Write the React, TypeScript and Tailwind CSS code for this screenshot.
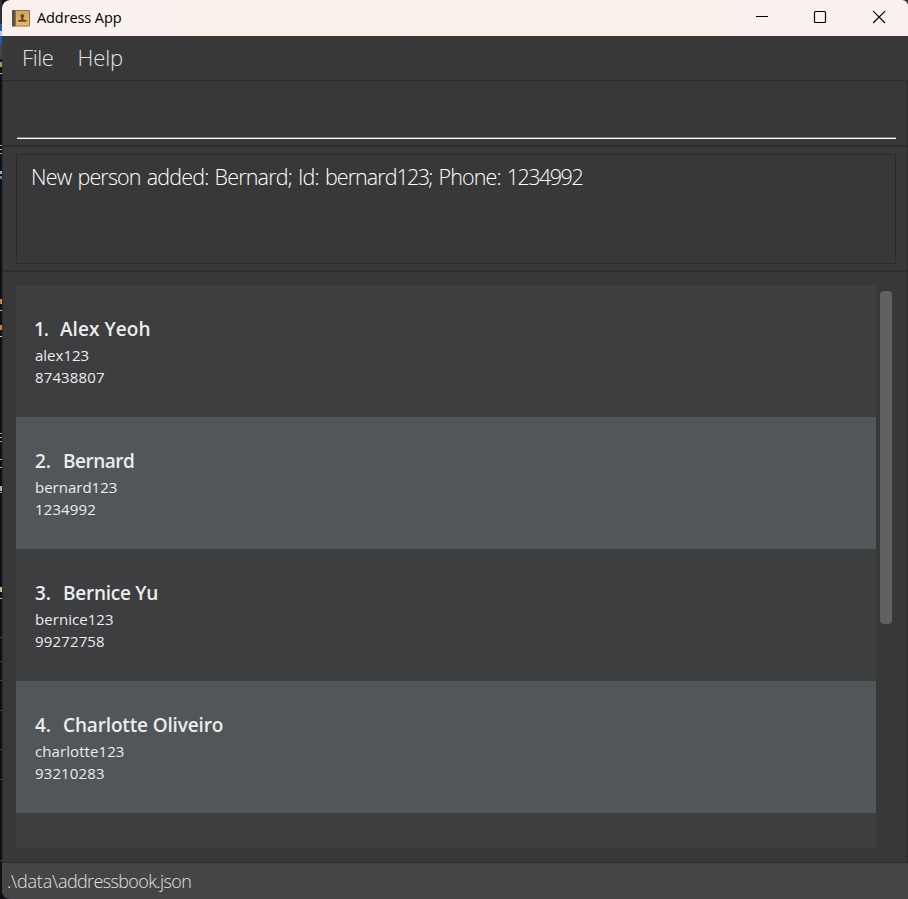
import React from "react";

type Person = { no: string; name: string; id: string; phone: string; noClass: string; nameClass: string; idClass: string; phoneClass: string };

const people: Person[] = [
  { no: "1.", name: "Alex Yeoh", id: "alex123", phone: "87438807", noClass: "-ml-px w-[26px] tracking-[-1px]", nameClass: "tracking-[0.050px]", idClass: "tracking-[0px]", phoneClass: "tracking-[0.130px]" },
  { no: "2.", name: "Bernard", id: "bernard123", phone: "1234992", noClass: "w-[28px]", nameClass: "tracking-[-0.500px]", idClass: "tracking-[0px]", phoneClass: "tracking-[0.130px]" },
  { no: "3.", name: "Bernice Yu", id: "bernice123", phone: "99272758", noClass: "w-[28px]", nameClass: "tracking-[-0.250px]", idClass: "tracking-[0.050px]", phoneClass: "tracking-[0.150px]" },
  { no: "4.", name: "Charlotte Oliveiro", id: "charlotte123", phone: "93210283", noClass: "w-[28px]", nameClass: "tracking-[-0.150px]", idClass: "tracking-[0.080px]", phoneClass: "tracking-[0.130px]" },
];

const specks: [number, number, string][] = [
  [0, 24, "#303030"], [24, 20, "#2a56b8"], [31, 5, "#b9cbed"], [44, 15, "#454545"],
  [62, 5, "#b09455"], [73, 1, "#cccccc"], [145, 1, "#aaaaaa"], [149, 1, "#aaaaaa"], [153, 1, "#aaaaaa"],
  [171, 3, "#8ab8d8"], [176, 3, "#5588aa"], [299, 5, "#c08850"], [310, 1, "#cccccc"],
  [325, 5, "#c08850"], [336, 1, "#cccccc"], [433, 1, "#aaaaaa"], [437, 1, "#aaaaaa"], [441, 1, "#aaaaaa"],
  [459, 1, "#aaaaaa"], [467, 1, "#aaaaaa"], [486, 5, "#a0b8b0"], [492, 1, "#b09455"],
  [587, 5, "#c0b890"], [598, 1, "#cccccc"], [637, 1, "#903020"], [661, 1, "#444444"],
  [680, 1, "#444444"], [710, 1, "#444444"], [749, 1, "#444444"], [779, 1, "#444444"], [860, 1, "#444444"],
];

function BookIcon() {
  return (
    <svg width="18" height="17" viewBox="0 0 18 17" className="block">
      <defs>
        <linearGradient id="cover" x1="0" y1="0" x2="0" y2="1">
          <stop offset="0" stopColor="#d5a363" />
          <stop offset="1" stopColor="#ecbb65" />
        </linearGradient>
      </defs>
      <rect x="0" y="0" width="18" height="16.5" rx="1" fill="#94703f" />
      <rect x="0" y="0" width="3" height="16.5" rx="1" fill="#57504e" />
      <rect x="4" y="1" width="13" height="14.5" fill="url(#cover)" />
      <path d="M8.500 5.800c0-1.200.6-1.900 1.800-1.900s1.800.7 1.800 1.900c0 1-.3 1.500-.7 2.100v1.500l2.500.5c.5.100.8.400.8.900v1H6v-1c0-.5.300-.8.800-.9l2.400-.5V7.900c-.4-.6-.7-1.100-.7-2.100z" fill="#65492c" />
    </svg>
  );
}

function TitleBar() {
  return (
    <header className="flex h-9 shrink-0 items-center rounded-tl-lg rounded-tr-md bg-linear-to-r from-[#f9f1ee] via-[#faf1eb] to-[#f9f1ee] pl-2.5 text-black">
      <BookIcon />
      <span className="ml-[7px] text-[14.5px] leading-5 tracking-[-0.090px] whitespace-pre">Address App</span>
      <div className="-mr-0.5 ml-auto flex">
        <svg width="58" height="36" className="block" shapeRendering="crispEdges">
          <path d="M20 16.500H32" stroke="#000" />
        </svg>
        <svg width="58" height="36" className="block">
          <rect x="20.500" y="11.500" width="11" height="11" rx="1" fill="none" stroke="#000" strokeWidth="1.200" />
        </svg>
        <svg width="58" height="36" className="block">
          <path d="M21.200 11.200L33 23M33 11.200L21.200 23" fill="none" stroke="#000" strokeWidth="1.200" />
        </svg>
      </div>
    </header>
  );
}

export default function App() {
  return (
    <div className="flex h-[899px] w-[908px] overflow-hidden bg-[#0d1015] font-['Open_Sans','Noto_Sans',sans-serif]">
      <svg width="2" height="899" className="block shrink-0" shapeRendering="crispEdges">
        {specks.map(([y, h, fill]) => (
          <rect key={y} x="0" y={y} width="2" height={h} fill={fill} />
        ))}
      </svg>
      <div className="flex min-w-0 flex-1 flex-col overflow-hidden rounded-l-lg bg-[#383838]">
        <TitleBar />
        <nav className="flex h-11 shrink-0 items-center gap-[24px] pb-0.5 pl-5 text-[22px] leading-[30px] font-light text-[#e4e4e4]">
          <span className="tracking-[-0.400px]">File</span>
          <span className="tracking-[-0.100px]">Help</span>
        </nav>
        <section className="flex h-[65px] shrink-0 flex-col border border-b-0 border-[#2c2c2c] pr-[11px] pl-3.5">
          <div className="h-[58px] border-b border-white shadow-[inset_0_-1px_0_#777777]" />
        </section>
        <section className="h-[125px] shrink-0 border-x border-t-2 border-[#2c2c2c] px-[11px] pt-[7px] pl-[13px]">
          <div className="h-[110px] border border-[#2b2b2b] pt-[7px] pl-3.5 text-[21.5px] leading-[30px] font-light whitespace-pre text-white">
            <p className="tracking-[-0.830px] [word-spacing:1.300px]">
              New person added: Bernard; Id: <span className="tracking-[-0.950px]">bernard</span><span className="tracking-[-1.700px]">123</span>; <span className="tracking-[-0.900px]">Phone:</span> <span className="tracking-[-1.500px]">1234992</span>
            </p>
          </div>
        </section>
        <section className="flex h-[592px] shrink-0 border-x border-t-2 border-[#2c2c2c] pt-[13px] pl-[13px]">
          <div className="h-[563px] w-[860px] overflow-hidden bg-[#3c3e3f]">
            {people.map((p, i) => (
              <article key={p.id} className={`h-[132px] pt-[30px] pl-[19px] text-[#ececec] ${i % 2 ? "bg-[#515658]" : "bg-[#3c3e3f]"}`}>
                <h2 className="flex text-[19px] leading-7 font-semibold whitespace-pre">
                  <span className={p.noClass}>{p.no}</span>
                  <span className={p.nameClass}>{p.name}</span>
                </h2>
                <p className="mt-px text-[15px] leading-[22px]"><span className={p.idClass}>{p.id}</span></p>
                <p className="text-[15px] leading-[22px]"><span className={p.phoneClass}>{p.phone}</span></p>
              </article>
            ))}
          </div>
          <div className="mt-1.5 ml-1 h-[333px] w-3 rounded bg-[#616161]" />
        </section>
        <footer className="h-[37px] shrink-0 border-t border-[#2a2a2a] bg-[#454545] pt-1 pl-[5px] text-[18px] leading-[28px] font-light text-[#e2e2e2]">
          <span className="tracking-[-0.200px]">.\data\</span><span className="tracking-[-0.620px]">addressbook.json</span>
        </footer>
      </div>
    </div>
  );
}
